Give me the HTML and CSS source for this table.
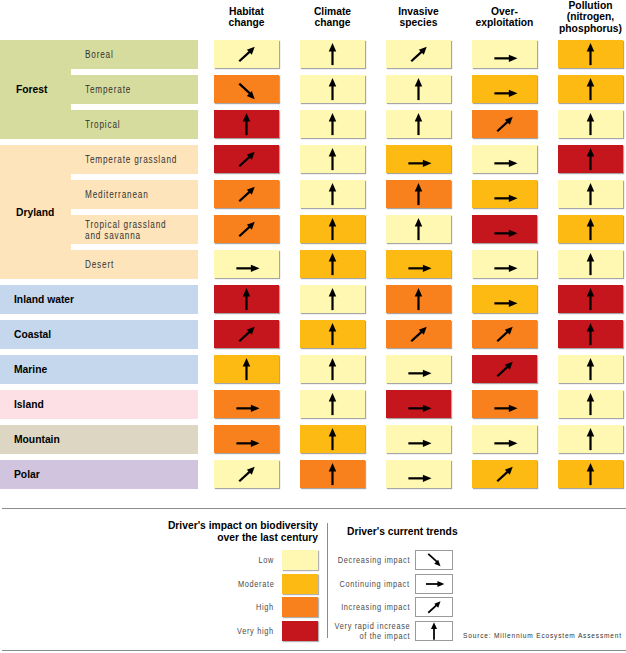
FILE: index.html
```html
<!DOCTYPE html>
<html lang="en">
<head>
<meta charset="utf-8">
<title>Drivers of biodiversity change</title>
<link rel="stylesheet" href="styles.css">
</head>
<body>
<svg class="defs" width="0" height="0" aria-hidden="true">
  <defs>
    <g id="u"><path d="M32.5 26V10" stroke="#000" stroke-width="2.3"/><path d="M28.6 11.8L32.5 3L36.4 11.8Z" fill="#000"/></g>
    <g id="r"><path d="M22 19H38" stroke="#000" stroke-width="2.3"/><path d="M37 15.2L46 19L37 22.8Z" fill="#000"/></g>
    <g id="i"><path d="M25 22L36.5 11.5" stroke="#000" stroke-width="2.3"/><path d="M38 15.4L32.8 10.2L41 7Z" fill="#000"/></g>
    <g id="d"><path d="M25 9L36.5 19.5" stroke="#000" stroke-width="2.3"/><path d="M32.8 21.8L38 16.6L41 25Z" fill="#000"/></g>
  </defs>
</svg>

<div class="matrix">
  <div class="corner"></div>
  <div class="hd">Habitat<br>change</div>
  <div class="hd">Climate<br>change</div>
  <div class="hd">Invasive<br>species</div>
  <div class="hd">Over-<br>exploitation</div>
  <div class="hd">Pollution<br>(nitrogen,<br>phosphorus)</div>

  <div class="cat forest span3">Forest</div>
  <div class="sub forest"><span class="nar">Boreal</span></div>
  <div class="cell l"><svg viewBox="0 0 65 29"><use href="#i"/></svg></div>
  <div class="cell l"><svg viewBox="0 0 65 29"><use href="#u"/></svg></div>
  <div class="cell l"><svg viewBox="0 0 65 29"><use href="#i"/></svg></div>
  <div class="cell l"><svg viewBox="0 0 65 29"><use href="#r"/></svg></div>
  <div class="cell m"><svg viewBox="0 0 65 29"><use href="#u"/></svg></div>

  <div class="sub forest"><span class="nar">Temperate</span></div>
  <div class="cell h"><svg viewBox="0 0 65 29"><use href="#d"/></svg></div>
  <div class="cell l"><svg viewBox="0 0 65 29"><use href="#u"/></svg></div>
  <div class="cell l"><svg viewBox="0 0 65 29"><use href="#u"/></svg></div>
  <div class="cell m"><svg viewBox="0 0 65 29"><use href="#r"/></svg></div>
  <div class="cell m"><svg viewBox="0 0 65 29"><use href="#u"/></svg></div>

  <div class="sub forest"><span class="nar">Tropical</span></div>
  <div class="cell v"><svg viewBox="0 0 65 29"><use href="#u"/></svg></div>
  <div class="cell l"><svg viewBox="0 0 65 29"><use href="#u"/></svg></div>
  <div class="cell l"><svg viewBox="0 0 65 29"><use href="#u"/></svg></div>
  <div class="cell h"><svg viewBox="0 0 65 29"><use href="#i"/></svg></div>
  <div class="cell l"><svg viewBox="0 0 65 29"><use href="#u"/></svg></div>

  <div class="cat dry span4">Dryland</div>
  <div class="sub dry"><span class="nar">Temperate grassland</span></div>
  <div class="cell v"><svg viewBox="0 0 65 29"><use href="#i"/></svg></div>
  <div class="cell l"><svg viewBox="0 0 65 29"><use href="#u"/></svg></div>
  <div class="cell m"><svg viewBox="0 0 65 29"><use href="#r"/></svg></div>
  <div class="cell l"><svg viewBox="0 0 65 29"><use href="#r"/></svg></div>
  <div class="cell v"><svg viewBox="0 0 65 29"><use href="#u"/></svg></div>

  <div class="sub dry"><span class="nar">Mediterranean</span></div>
  <div class="cell h"><svg viewBox="0 0 65 29"><use href="#i"/></svg></div>
  <div class="cell l"><svg viewBox="0 0 65 29"><use href="#u"/></svg></div>
  <div class="cell h"><svg viewBox="0 0 65 29"><use href="#u"/></svg></div>
  <div class="cell m"><svg viewBox="0 0 65 29"><use href="#r"/></svg></div>
  <div class="cell l"><svg viewBox="0 0 65 29"><use href="#u"/></svg></div>

  <div class="sub dry"><span class="nar two">Tropical grassland<br>and savanna</span></div>
  <div class="cell h"><svg viewBox="0 0 65 29"><use href="#i"/></svg></div>
  <div class="cell m"><svg viewBox="0 0 65 29"><use href="#u"/></svg></div>
  <div class="cell l"><svg viewBox="0 0 65 29"><use href="#u"/></svg></div>
  <div class="cell v"><svg viewBox="0 0 65 29"><use href="#r"/></svg></div>
  <div class="cell m"><svg viewBox="0 0 65 29"><use href="#u"/></svg></div>

  <div class="sub dry"><span class="nar">Desert</span></div>
  <div class="cell l"><svg viewBox="0 0 65 29"><use href="#r"/></svg></div>
  <div class="cell m"><svg viewBox="0 0 65 29"><use href="#u"/></svg></div>
  <div class="cell m"><svg viewBox="0 0 65 29"><use href="#r"/></svg></div>
  <div class="cell l"><svg viewBox="0 0 65 29"><use href="#r"/></svg></div>
  <div class="cell l"><svg viewBox="0 0 65 29"><use href="#u"/></svg></div>

  <div class="single water">Inland water</div>
  <div class="cell v"><svg viewBox="0 0 65 29"><use href="#u"/></svg></div>
  <div class="cell l"><svg viewBox="0 0 65 29"><use href="#u"/></svg></div>
  <div class="cell h"><svg viewBox="0 0 65 29"><use href="#u"/></svg></div>
  <div class="cell m"><svg viewBox="0 0 65 29"><use href="#r"/></svg></div>
  <div class="cell v"><svg viewBox="0 0 65 29"><use href="#u"/></svg></div>

  <div class="single water">Coastal</div>
  <div class="cell v"><svg viewBox="0 0 65 29"><use href="#i"/></svg></div>
  <div class="cell m"><svg viewBox="0 0 65 29"><use href="#u"/></svg></div>
  <div class="cell h"><svg viewBox="0 0 65 29"><use href="#i"/></svg></div>
  <div class="cell h"><svg viewBox="0 0 65 29"><use href="#i"/></svg></div>
  <div class="cell v"><svg viewBox="0 0 65 29"><use href="#u"/></svg></div>

  <div class="single water">Marine</div>
  <div class="cell m"><svg viewBox="0 0 65 29"><use href="#u"/></svg></div>
  <div class="cell l"><svg viewBox="0 0 65 29"><use href="#u"/></svg></div>
  <div class="cell l"><svg viewBox="0 0 65 29"><use href="#r"/></svg></div>
  <div class="cell v"><svg viewBox="0 0 65 29"><use href="#i"/></svg></div>
  <div class="cell l"><svg viewBox="0 0 65 29"><use href="#u"/></svg></div>

  <div class="single island">Island</div>
  <div class="cell h"><svg viewBox="0 0 65 29"><use href="#r"/></svg></div>
  <div class="cell l"><svg viewBox="0 0 65 29"><use href="#u"/></svg></div>
  <div class="cell v"><svg viewBox="0 0 65 29"><use href="#r"/></svg></div>
  <div class="cell h"><svg viewBox="0 0 65 29"><use href="#r"/></svg></div>
  <div class="cell l"><svg viewBox="0 0 65 29"><use href="#u"/></svg></div>

  <div class="single mountain">Mountain</div>
  <div class="cell h"><svg viewBox="0 0 65 29"><use href="#r"/></svg></div>
  <div class="cell m"><svg viewBox="0 0 65 29"><use href="#u"/></svg></div>
  <div class="cell l"><svg viewBox="0 0 65 29"><use href="#r"/></svg></div>
  <div class="cell l"><svg viewBox="0 0 65 29"><use href="#r"/></svg></div>
  <div class="cell l"><svg viewBox="0 0 65 29"><use href="#u"/></svg></div>

  <div class="single polar">Polar</div>
  <div class="cell l"><svg viewBox="0 0 65 29"><use href="#i"/></svg></div>
  <div class="cell h"><svg viewBox="0 0 65 29"><use href="#u"/></svg></div>
  <div class="cell l"><svg viewBox="0 0 65 29"><use href="#r"/></svg></div>
  <div class="cell m"><svg viewBox="0 0 65 29"><use href="#i"/></svg></div>
  <div class="cell m"><svg viewBox="0 0 65 29"><use href="#u"/></svg></div>
</div>

<div class="legend">
  <div class="leg-impact">
    <div class="leg-title">Driver's impact on biodiversity<br>over the last century</div>
    <div class="leg-rows">
      <div class="leg-row"><span class="leg-label">Low</span><span class="swatch l"></span></div>
      <div class="leg-row"><span class="leg-label">Moderate</span><span class="swatch m"></span></div>
      <div class="leg-row"><span class="leg-label">High</span><span class="swatch h"></span></div>
      <div class="leg-row"><span class="leg-label">Very high</span><span class="swatch v"></span></div>
    </div>
  </div>
  <div class="divider"></div>
  <div class="leg-trend">
    <div class="leg-title single-line">Driver's current trends</div>
    <div class="leg-rows">
      <div class="leg-row end"><span class="leg-label">Decreasing impact</span><span class="tbox"><svg viewBox="14 5.25 37 23.5"><use href="#d"/></svg></span></div>
      <div class="leg-row end"><span class="leg-label">Continuing impact</span><span class="tbox"><svg viewBox="14 7.25 37 23.5"><use href="#r"/></svg></span></div>
      <div class="leg-row end"><span class="leg-label">Increasing impact</span><span class="tbox"><svg viewBox="14 2.75 37 23.5"><use href="#i"/></svg></span></div>
      <div class="leg-row end"><span class="leg-label two">Very rapid increase<br>of the impact</span><span class="tbox"><svg viewBox="14 2.75 37 23.5"><use href="#u"/></svg></span></div>
    </div>
  </div>
  <div class="source">Source: Millennium Ecosystem Assessment</div>
</div>
</body>
</html>
```
FILE: styles.css
```css
html, body {
  margin: 0;
  padding: 0;
  background: #ffffff;
  overflow: hidden;
}
body {
  font-family: "Liberation Sans", Arial, sans-serif;
  color: #000;
  width: 626px;
}
.defs {
  position: absolute;
  width: 0;
  height: 0;
  overflow: hidden;
}

.matrix {
  display: grid;
  grid-template-columns: 71px 127px 86px 86px 86px 86px 80px;
  grid-template-rows: 34px repeat(13, 29px);
  row-gap: 6px;
}
.corner {
  grid-column: span 2;
}
.hd {
  margin-left: 16px;
  width: 65px;
  align-self: center;
  text-align: center;
  font-weight: bold;
  font-size: 10.3px;
  line-height: 11.5px;
  white-space: nowrap;
}

.cat {
  display: flex;
  align-items: center;
  padding-left: 16px;
  font-weight: bold;
  font-size: 10.3px;
}
.span3 { grid-row: span 3; }
.span4 { grid-row: span 4; }
.single {
  grid-column: span 2;
  display: flex;
  align-items: center;
  padding-left: 14px;
  font-weight: bold;
  font-size: 10.3px;
}
.sub {
  display: flex;
  align-items: center;
  padding-left: 14px;
  overflow: hidden;
}
.nar {
  display: inline-block;
  font-size: 10px;
  letter-spacing: 1px;
  line-height: 12px;
  color: #333;
  white-space: nowrap;
  transform: scaleX(0.82);
  transform-origin: left center;
}
.nar.two {
  line-height: 11px;
}

.forest { background: #d6dc9d; }
.dry { background: #fde4bb; }
.water { background: #c5d7ed; }
.island { background: #fde0e5; }
.mountain { background: #dcd6c3; }
.polar { background: #d1c4de; }

.cell {
  margin-left: 16px;
  width: 65px;
  height: 28px;
  box-shadow: 1px 1px 1px rgba(0, 0, 0, 0.35);
}
.cell svg {
  display: block;
  width: 65px;
  height: 28px;
}
.l { background: #fff8b3; }
.m { background: #fdba12; }
.h { background: #f8801d; }
.v { background: #c4161c; }

.legend {
  margin-top: 19px;
  margin-left: 2px;
  height: 143px;
  border-top: 1px solid #8c8c8c;
  border-bottom: 1px solid #8c8c8c;
  display: flex;
  align-items: flex-start;
  padding-top: 11px;
  box-sizing: border-box;
}
.leg-impact {
  flex: none;
  width: 316px;
  display: flex;
  flex-direction: column;
  align-items: flex-end;
}
.leg-title {
  font-weight: bold;
  font-size: 10.3px;
  line-height: 11.5px;
  text-align: right;
  white-space: nowrap;
}
.leg-title.single-line {
  line-height: 23px;
  text-align: left;
}
.leg-rows {
  margin-top: 7px;
  display: flex;
  flex-direction: column;
  gap: 3.5px;
}
.leg-row {
  display: flex;
  align-items: center;
  justify-content: flex-end;
  gap: 8px;
  height: 20px;
}
.leg-row.end {
  gap: 5px;
}
.leg-label {
  display: inline-block;
  font-size: 9px;
  letter-spacing: 0.8px;
  color: #4a4a4a;
  text-align: right;
  white-space: nowrap;
  transform: scaleX(0.82);
  transform-origin: right center;
}
.leg-label.two {
  line-height: 10px;
}
.swatch {
  flex: none;
  width: 36px;
  height: 20px;
  box-shadow: 1px 1px 1px rgba(0, 0, 0, 0.3);
}
.divider {
  flex: none;
  margin-left: 9px;
  margin-top: 3px;
  height: 115px;
  border-left: 1px solid #8c8c8c;
}
.leg-trend {
  flex: none;
  margin-left: 19px;
  width: 106px;
  display: flex;
  flex-direction: column;
}
.tbox {
  flex: none;
  width: 38px;
  height: 20px;
  box-sizing: border-box;
  border: 1px solid #9a9a9a;
  background: #fff;
}
.tbox svg {
  display: block;
  width: 36px;
  height: 18px;
}
.source {
  flex: none;
  align-self: flex-end;
  margin-left: 10px;
  margin-bottom: 10px;
  font-size: 8px;
  letter-spacing: 1px;
  color: #333;
  white-space: nowrap;
  transform: scaleX(0.82);
  transform-origin: left center;
}
```
